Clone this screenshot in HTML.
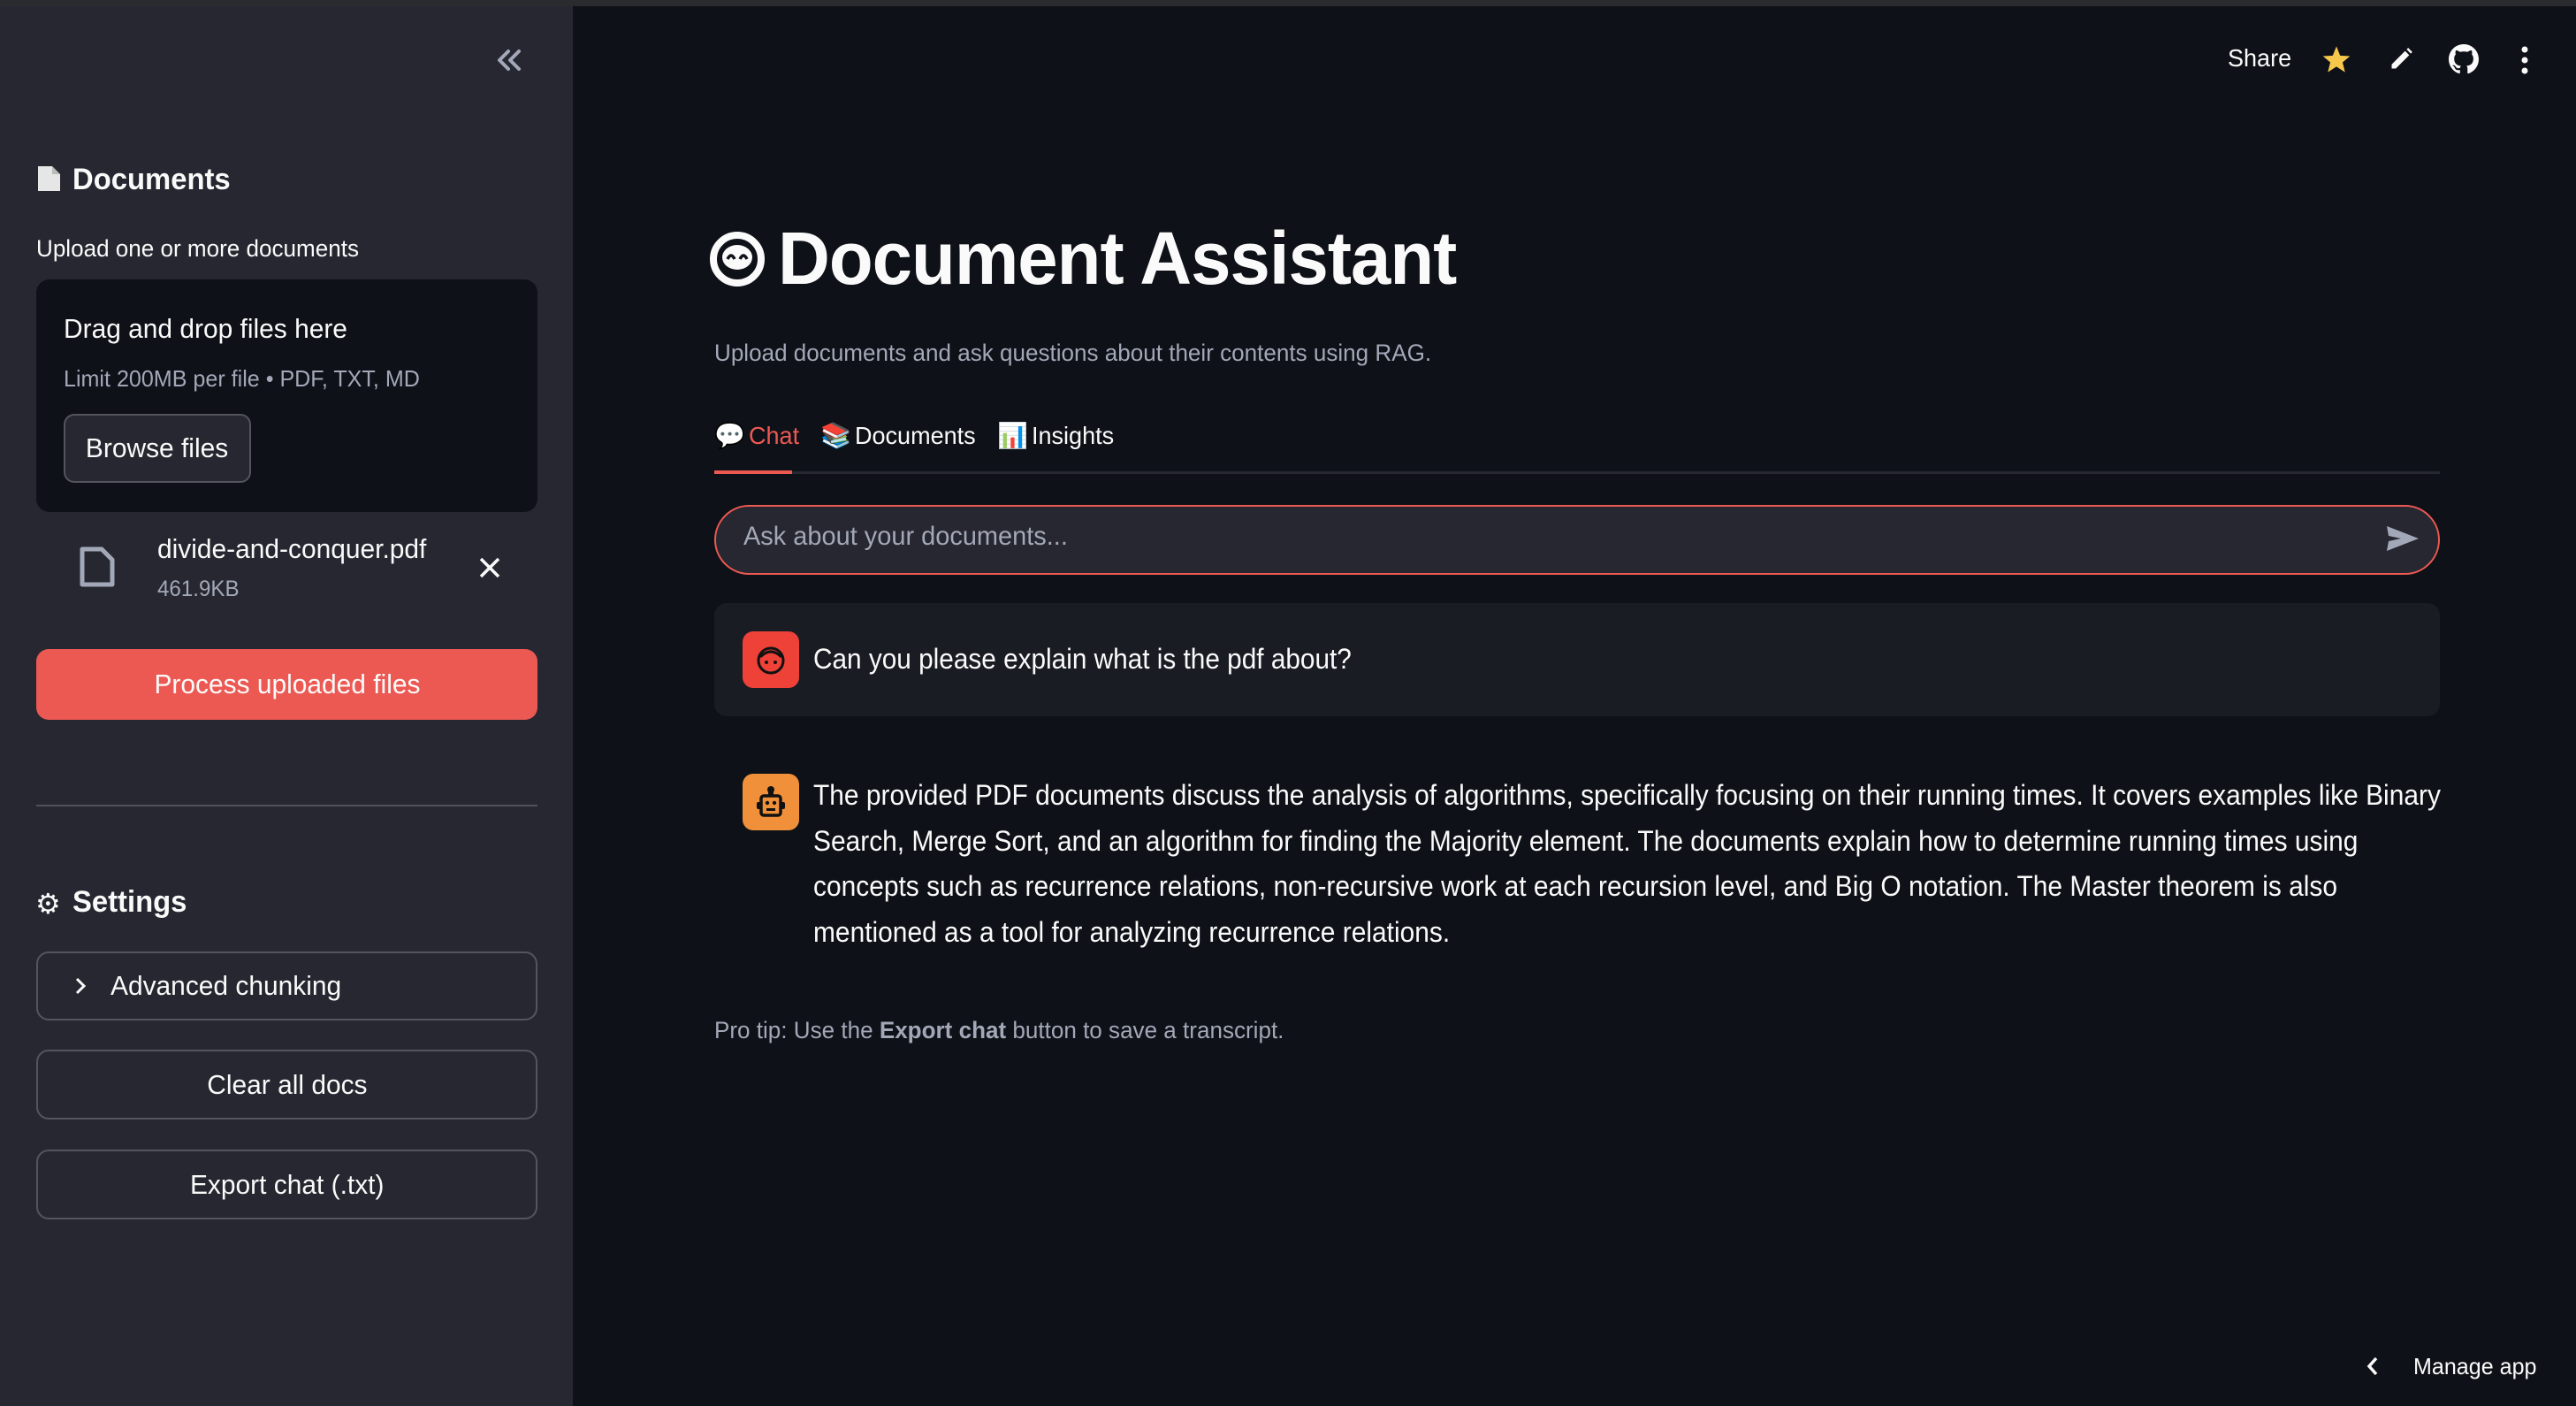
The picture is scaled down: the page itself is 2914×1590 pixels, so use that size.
<!DOCTYPE html>
<html><head><meta charset="utf-8">
<style>
*{margin:0;padding:0;box-sizing:border-box}
html,body{width:2914px;height:1590px;overflow:hidden;background:#0e1117;font-family:"Liberation Sans","DejaVu Sans",sans-serif;color:#fafafa}
.a{position:absolute;white-space:nowrap}
.n{display:inline-block;transform:scaleX(.965);transform-origin:left center}
.side{position:absolute;left:0;top:0;width:648px;height:1590px;background:#262730}
.topbar{position:absolute;left:0;top:0;width:2914px;height:7px;background:#2a2b2e}
.btn{position:absolute;border:2px solid rgba(250,250,250,.22);border-radius:14px;display:flex;align-items:center;justify-content:center;font-size:29px}
</style></head><body>
<div class="side"></div>
<div class="topbar"></div>

<svg class="a" style="left:560px;top:54px" width="32" height="28" viewBox="0 0 32 28"><path d="M15 4 L5 14 L15 24 M27 4 L17 14 L27 24" stroke="#a3a8b8" stroke-width="4" fill="none" stroke-linecap="round" stroke-linejoin="round"/></svg>
<svg class="a" style="left:41px;top:187px" width="30" height="30" viewBox="0 0 30 30"><path d="M2 1 H18 L27 10 V29 H2 Z" fill="#e6e6e6"/><path d="M18 1 V10 H27" fill="#bbb"/></svg>
<div class="a" style="left:82px;top:184px;font-size:34px;font-weight:bold"><span class="n">Documents</span></div>
<div class="a" style="left:41px;top:266px;font-size:27px"><span class="n">Upload one or more documents</span></div>
<div class="a" style="left:41px;top:316px;width:567px;height:263px;background:#0e1117;border-radius:15px"></div>
<div class="a" style="left:72px;top:354px;font-size:31px"><span class="n">Drag and drop files here</span></div>
<div class="a" style="left:72px;top:413px;font-size:26px;color:#a3a8b8"><span class="n">Limit 200MB per file • PDF, TXT, MD</span></div>
<div class="btn" style="left:72px;top:468px;width:212px;height:78px;background:#262730;border-radius:12px;font-size:31px"><span class="n" style="transform-origin:center">Browse files</span></div>
<svg class="a" style="left:89px;top:617px" width="42" height="48" viewBox="0 0 42 48"><path d="M4 4 H26 L38 16 V44 H4 Z" fill="none" stroke="#a3a8b8" stroke-width="5" stroke-linejoin="round"/></svg>
<div class="a" style="left:178px;top:603px;font-size:31px"><span class="n">divide-and-conquer.pdf</span></div>
<div class="a" style="left:178px;top:652px;font-size:25px;color:#a3a8b8"><span class="n">461.9KB</span></div>
<svg class="a" style="left:541px;top:629px" width="26" height="26" viewBox="0 0 26 26"><path d="M3 3 L23 23 M23 3 L3 23" stroke="#fafafa" stroke-width="3.5"/></svg>
<div class="a" style="left:41px;top:734px;width:567px;height:80px;background:#ec5953;border-radius:14px;display:flex;align-items:center;justify-content:center;font-size:31px"><span class="n" style="transform-origin:center">Process uploaded files</span></div>
<div class="a" style="left:41px;top:910px;width:567px;height:2px;background:rgba(250,250,250,.2)"></div>
<div class="a" style="left:40px;top:1003px;font-size:32px">⚙</div>
<div class="a" style="left:82px;top:1001px;font-size:34px;font-weight:bold"><span class="n">Settings</span></div>
<div class="btn" style="left:41px;top:1076px;width:567px;height:78px;justify-content:flex-start;padding-left:40px"><svg width="16" height="22" viewBox="0 0 16 22"><path d="M4 3 L12 11 L4 19" stroke="#fafafa" stroke-width="3" fill="none"/></svg><span class="n" style="margin-left:26px;font-size:31px">Advanced chunking</span></div>
<div class="btn" style="left:41px;top:1187px;width:567px;height:79px"><span class="n" style="transform-origin:center;font-size:31px">Clear all docs</span></div>
<div class="btn" style="left:41px;top:1300px;width:567px;height:79px"><span class="n" style="transform-origin:center;font-size:31px">Export chat (.txt)</span></div>

<div class="a" style="left:2520px;top:50px;font-size:28px"><span class="n">Share</span></div>
<svg class="a" style="left:2626px;top:51px" width="34" height="32" viewBox="0 0 24 23"><path d="M12 1 L15 8.5 L23 9 L17 14 L19 22 L12 17.5 L5 22 L7 14 L1 9 L9 8.5 Z" fill="#f5c84c"/></svg>
<svg class="a" style="left:2702px;top:53px" width="28" height="28" viewBox="0 0 24 24"><path d="M3 21 V17 L16 4 L20 8 L7 21 Z M17.5 2.5 L19 1 L23 5 L21.5 6.5 Z" fill="#fafafa"/></svg>
<svg class="a" style="left:2770px;top:50px" width="34" height="34" viewBox="0 0 16 16"><path fill="#fafafa" d="M8 0C3.58 0 0 3.58 0 8c0 3.54 2.290 6.53 5.47 7.59.4.07.55-.17.55-.38 0-.19-.01-.82-.01-1.49-2.01.37-2.53-.49-2.690-.94-.09-.23-.48-.94-.82-1.130-.28-.15-.68-.52-.01-.53.63-.01 1.080.58 1.230.82.72 1.21 1.870.87 2.330.66.07-.52.28-.87.51-1.070-1.780-.2-3.640-.89-3.640-3.950 0-.87.31-1.590.82-2.150-.08-.2-.36-1.020.08-2.120 0 0 .67-.21 2.2.82.64-.18 1.320-.27 2-.27.68 0 1.360.09 2 .27 1.530-1.040 2.2-.82 2.2-.82.44 1.1.16 1.920.08 2.120.51.56.82 1.270.82 2.150 0 3.070-1.870 3.750-3.650 3.950.29.25.54.73.54 1.480 0 1.070-.01 1.930-.01 2.2 0 .21.15.46.55.38A8.013 8.013 0 0016 8c0-4.420-3.580-8-8-8z"/></svg>
<svg class="a" style="left:2849px;top:51px" width="14" height="34" viewBox="0 0 14 34"><circle cx="7" cy="5" r="3.5" fill="#fafafa"/><circle cx="7" cy="17" r="3.5" fill="#fafafa"/><circle cx="7" cy="29" r="3.5" fill="#fafafa"/></svg>

<svg class="a" style="left:802px;top:261px" width="64" height="64" viewBox="0 0 64 64"><circle cx="32" cy="32" r="27" fill="#0e1117" stroke="#fafafa" stroke-width="8"/><ellipse cx="32" cy="30" rx="17" ry="14" fill="#fafafa"/><path d="M21 32 q4 -8 8 0 M35 32 q4 -8 8 0" stroke="#0e1117" stroke-width="3.5" fill="none"/><circle cx="32" cy="50" r="3" fill="#0e1117"/></svg>
<div class="a" style="left:880px;top:244px;font-size:84px;font-weight:bold;letter-spacing:-1px"><span class="n" style="transform:scaleX(.97)">Document Assistant</span></div>
<div class="a" style="left:808px;top:384px;font-size:27px;color:#a3a8b8"><span class="n">Upload documents and ask questions about their contents using RAG.</span></div>

<div class="a" style="left:808px;top:476px;font-size:28px;color:#ec5953"><span>💬</span><span class="n" style="margin-left:4px">Chat</span></div>
<div class="a" style="left:928px;top:476px;font-size:28px"><span>📚</span><span class="n" style="margin-left:4px">Documents</span></div>
<div class="a" style="left:1128px;top:476px;font-size:28px"><span>📊</span><span class="n" style="margin-left:4px">Insights</span></div>
<div class="a" style="left:808px;top:533px;width:1952px;height:3px;background:#262730"></div>
<div class="a" style="left:808px;top:532px;width:88px;height:4px;background:#ec5953"></div>

<div class="a" style="left:808px;top:571px;width:1952px;height:79px;border:2px solid #ec5953;border-radius:40px;background:#262730"></div>
<div class="a" style="left:841px;top:590px;font-size:30px;color:#a3a8b8"><span class="n">Ask about your documents...</span></div>
<svg class="a" style="left:2700px;top:593px" width="36" height="32" viewBox="0 0 36 32"><path d="M0 2 L36 16 L0 30 L2 19 L16 16 L2 13 Z" fill="#a3a8b8"/></svg>

<div class="a" style="left:808px;top:682px;width:1952px;height:128px;background:#1a1c24;border-radius:14px"></div>
<div class="a" style="left:840px;top:714px;width:64px;height:64px;background:#ee4138;border-radius:12px"></div>
<svg class="a" style="left:854px;top:728px" width="36" height="36" viewBox="0 0 36 36"><circle cx="18" cy="19" r="14" fill="none" stroke="#111" stroke-width="3"/><path d="M6 15 q12 -12 24 0" stroke="#111" stroke-width="3" fill="none"/><circle cx="13" cy="21" r="2" fill="#111"/><circle cx="23" cy="21" r="2" fill="#111"/></svg>
<div class="a" style="left:920px;top:727px;font-size:32px"><span class="n" style="transform:scaleX(.93)">Can you please explain what is the pdf about?</span></div>

<div class="a" style="left:840px;top:875px;width:64px;height:64px;background:#f0903a;border-radius:12px"></div>
<svg class="a" style="left:854px;top:888px" width="36" height="38" viewBox="0 0 36 38"><circle cx="18" cy="5" r="4" fill="#111"/><rect x="15" y="7" width="6" height="5" fill="#111"/><rect x="7" y="12" width="22" height="22" rx="3" fill="none" stroke="#111" stroke-width="3.5"/><rect x="2" y="19" width="5" height="8" rx="2" fill="#111"/><rect x="29" y="19" width="5" height="8" rx="2" fill="#111"/><circle cx="14" cy="20" r="2.2" fill="#111"/><circle cx="22" cy="20" r="2.2" fill="#111"/><rect x="13" y="26" width="10" height="3" fill="#111"/></svg>
<div class="a" style="left:920px;top:874px;font-size:32px;line-height:51.7px"><span class="n" style="transform:scaleX(.935)">The provided PDF documents discuss the analysis of algorithms, specifically focusing on their running times. It covers examples like Binary<br>Search, Merge Sort, and an algorithm for finding the Majority element. The documents explain how to determine running times using<br>concepts such as recurrence relations, non-recursive work at each recursion level, and Big O notation. The Master theorem is also<br>mentioned as a tool for analyzing recurrence relations.</span></div>

<div class="a" style="left:808px;top:1150px;font-size:27px;color:#a3a8b8"><span class="n">Pro tip: Use the <b>Export chat</b> button to save a transcript.</span></div>

<svg class="a" style="left:2676px;top:1533px" width="16" height="24" viewBox="0 0 16 24"><path d="M12 3 L4 12 L12 21" stroke="#fafafa" stroke-width="3.5" fill="none"/></svg>
<div class="a" style="left:2730px;top:1530px;font-size:26px"><span class="n">Manage app</span></div>
</body></html>
